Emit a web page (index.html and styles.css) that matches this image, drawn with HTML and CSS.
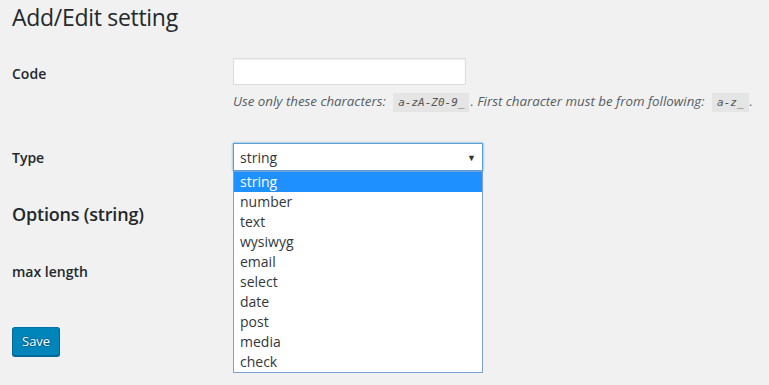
FILE: index.html
```html
<!DOCTYPE html>
<html>
<head>
<meta charset="utf-8">
<link rel="stylesheet" href="styles.css">
</head>
<body>
<div class="wrap">
  <h1 class="title">Add/Edit setting</h1>
  <div class="row row-code">
    <div class="label">Code</div>
    <div class="field">
      <div class="input"></div>
      <p class="desc">Use only these characters: <code>a-zA-Z0-9_</code>. First character must be from following: <code>a-z_</code>.</p>
    </div>
  </div>
  <div class="row row-type">
    <div class="label">Type</div>
    <div class="field">
      <div class="select-wrap">
        <div class="select"><span>string</span><span class="arrow">▼</span></div>
        <ul class="dropdown">
          <li class="active">string</li>
          <li>number</li>
          <li>text</li>
          <li>wysiwyg</li>
          <li>email</li>
          <li>select</li>
          <li>date</li>
          <li>post</li>
          <li>media</li>
          <li>check</li>
        </ul>
      </div>
    </div>
  </div>
  <h2 class="section">Options (string)</h2>
  <div class="row row-max">
    <div class="label">max length</div>
    <div class="field"><div class="input small"></div></div>
  </div>
  <button class="save">Save</button>
</div>
</body>
</html>
```
FILE: styles.css
```css
html, body {
  margin: 0;
  background: #f1f1f1;
}
body {
  font-family: "Open Sans", "Noto Sans", sans-serif;
  font-size: 14px;
  color: #23282d;
  min-height: 385px;
}
.wrap {
  padding: 0 12px 40px;
}
.title {
  font-size: 23px;
  font-weight: 400;
  line-height: 29px;
  margin: 0;
  padding-top: 3px;
  letter-spacing: -0.3px;
}
.row {
  display: flex;
}
.label {
  width: 221px;
  flex: none;
  font-weight: 600;
  font-size: 14px;
  line-height: 20px;
}
.field {
  flex: 1;
}
.row-code {
  margin-top: 26px;
}
.row-code .label {
  padding-top: 6px;
}
.input {
  width: 231px;
  height: 25px;
  background: #fff;
  border: 1px solid #ddd;
  box-shadow: inset 0 1px 2px rgba(0,0,0,.07);
}
.desc {
  margin: 6px 0 0;
  font-size: 13.3px;
  font-style: italic;
  color: #555d66;
  line-height: 20px;
  letter-spacing: 0;
}
.desc code {
  font-family: "DejaVu Sans Mono", monospace;
  font-style: italic;
  font-size: 11px;
  background: #e5e5e5;
  color: #555;
  padding: 3px 5px 3px;
  margin: 0 1px 0 4px;
  letter-spacing: 0;
}
.row-type {
  margin-top: 30px;
}
.row-type .label {
  padding-top: 5px;
}
.select-wrap {
  position: relative;
  width: 250px;
}
.select {
  height: 26px;
  border: 1px solid #5b9dd9;
  box-shadow: 0 0 2px rgba(30,140,190,.8);
  background: #fff;
  display: flex;
  align-items: center;
  justify-content: space-between;
  padding: 0 6px;
  color: #32373c;
}
.arrow {
  font-size: 9px;
  color: #333;
  margin-right: 0;
}
.dropdown {
  position: absolute;
  top: 28px;
  left: 0;
  width: 248px;
  margin: 0;
  padding: 0;
  list-style: none;
  background: #fff;
  border: 1px solid #7c9fd4;
  z-index: 5;
}
.dropdown li {
  height: 20px;
  line-height: 20px;
  padding-left: 6px;
  color: #32373c;
}
.dropdown li.active {
  background: #1e90ff;
  color: #fff;
}
.section {
  font-size: 18px;
  font-weight: 600;
  line-height: 23px;
  margin: 32px 0 0;
  letter-spacing: -0.2px;
}
.row-max {
  margin-top: 33px;
}
.row-max .label {
  padding-top: 3px;
}
.input.small {
  width: 80px;
}
.save {
  display: block;
  margin-top: 41px;
  height: 29px;
  padding: 0 9px 1px;
  font-family: inherit;
  font-size: 13px;
  color: #fff;
  background: #0085ba;
  border: 1px solid;
  border-color: #0073aa #006799 #006799;
  border-radius: 3px;
  box-shadow: 0 1px 0 #006799;
  text-shadow: 0 -1px 1px #006799, 1px 0 1px #006799, 0 1px 1px #006799, -1px 0 1px #006799;
}
```
